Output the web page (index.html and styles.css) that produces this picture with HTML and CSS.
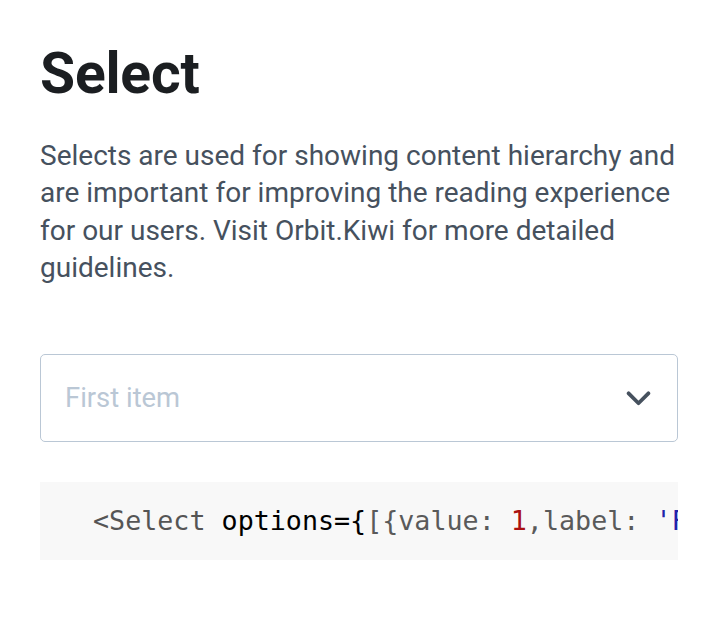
FILE: index.html
```html
<!DOCTYPE html>
<html lang="en">
<head>
<meta charset="utf-8">
<title>Select</title>
<link rel="stylesheet" href="styles.css">
</head>
<body>
<main class="page">
  <h1 class="title">Select</h1>
  <p class="lead">Selects are used for showing content hierarchy and are important for improving the reading experience for our users. Visit Orbit.Kiwi for more detailed guidelines.</p>
  <div class="select">
    <span class="placeholder">First item</span>
    <svg class="chevron" viewBox="0 0 24 24" width="24" height="24" aria-hidden="true"><path d="M2.5 8l9.5 9.5L21.5 8" fill="none" stroke="currentColor" stroke-width="3.6" stroke-linecap="round" stroke-linejoin="round"/></svg>
  </div>
  <pre class="code"><code><span class="c-tag">&lt;Select</span> <span class="c-attr">options={</span><span class="c-punc">[{value: </span><span class="c-num">1</span><span class="c-punc">,label: </span><span class="c-str">'First item'</span><span class="c-punc">},{value: </span><span class="c-num">2</span><span class="c-punc">,label: </span><span class="c-str">'Second item'</span><span class="c-punc">}]</span><span class="c-attr">}</span> <span class="c-attr">placeholder=</span><span class="c-str">"First item"</span> <span class="c-tag">/&gt;</span></code></pre>
</main>
</body>
</html>
```
FILE: styles.css
```css
html, body {
  margin: 0;
  padding: 0;
  background: #ffffff;
}

.page {
  width: 638px;
  padding: 42px 0 0 40px;
  font-family: Roboto, "Liberation Sans", sans-serif;
}

.title {
  margin: 0;
  font-size: 57px;
  line-height: 64px;
  font-weight: 700;
  color: #1b1e21;
  letter-spacing: -0.2px;
}

.lead {
  margin: 31px 0 0 0;
  font-size: 28px;
  line-height: 37.4px;
  color: #46515e;
}

.select {
  margin-top: 67px;
  height: 86px;
  border: 1px solid #bac7d5;
  border-radius: 5px;
  display: flex;
  align-items: center;
  justify-content: space-between;
  padding: 0 26px 0 24px;
}

.placeholder {
  font-size: 27.4px;
  color: #bac7d5;
}

.chevron {
  width: 25px;
  height: 25px;
  color: #46515e;
}

.code {
  margin: 40px 0 0 0;
  background: #f8f8f8;
  height: 78px;
  padding: 0 0 0 53px;
  box-sizing: border-box;
  overflow: hidden;
  display: flex;
  align-items: center;
  font-family: "DejaVu Sans Mono", monospace;
  font-size: 26.7px;
  line-height: 32px;
  white-space: pre;
}

.c-tag { color: #555555; }
.c-attr { color: #000000; }
.c-punc { color: #5a5a5a; }
.c-num { color: #aa1111; }
.c-str { color: #2222aa; }
```
